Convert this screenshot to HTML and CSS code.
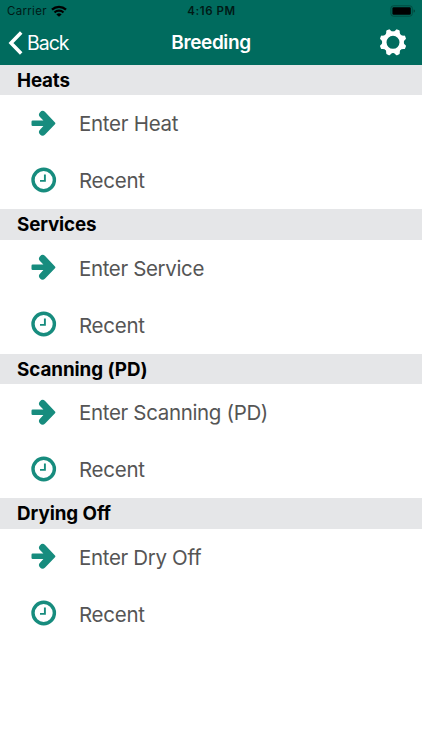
FILE: index.html
```html
<!DOCTYPE html>
<html lang="en">
<head>
<meta charset="utf-8">
<title>Breeding</title>
<link rel="stylesheet" href="styles.css">
</head>
<body>
<svg class="defs" width="0" height="0">
  <symbol id="arrow" viewBox="0 0 26 26">
    <path d="M1.7 10.6H12.4L9.2 7.2A3.3 3.3 0 0 1 14.1 2L24 12.4Q24.8 13.3 24 14.2L14.1 24.6A3.3 3.3 0 0 1 9.2 19.4L12.4 16H1.7Q.5 16 .5 14.8V11.8Q.5 10.6 1.7 10.6z" fill="currentColor"/>
  </symbol>
  <symbol id="clock" viewBox="0 0 26 26">
    <circle cx="12.7" cy="13" r="10.7" fill="none" stroke="currentColor" stroke-width="3.4"/>
    <path d="M13.9 7.4V13.9H9" fill="none" stroke="currentColor" stroke-width="1.9"/>
  </symbol>
</svg>
<header class="top">
  <div class="status">
    <div class="carrier"><span>Carrier</span>
      <svg width="16" height="12" viewBox="0 0 15 11"><g fill="none" stroke="#000" stroke-width="2.1"><path d="M.9 4.2a9.6 9.6 0 0 1 13.2 0"/><path d="M3.3 6.9a6.1 6.1 0 0 1 8.4 0"/></g><path d="M7.5 11L5 8.7a3.6 3.6 0 0 1 5 0z"/></svg>
    </div>
    <div class="time">4:16 PM</div>
    <svg class="battery" width="26" height="12" viewBox="0 0 26 12"><rect x=".9" y=".8" width="21.4" height="10.4" rx="2.6" fill="none" stroke="#004a3f" stroke-width="1"/><rect x="2.4" y="2.3" width="18.4" height="7.4" rx="1.2"/><path d="M23.7 4.2c1.6.7 1.6 2.9 0 3.6z" fill="#003f35"/></svg>
  </div>
  <nav class="nav">
    <a class="back"><svg width="15" height="24" viewBox="0 0 15 24"><path d="M13.2 1.6L3 12L13.2 22.4" fill="none" stroke="#fff" stroke-width="3.5"/></svg><span>Back</span></a>
    <h1>Breeding</h1>
    <svg class="gear" width="28" height="28" viewBox="-14 -13.3 28 28">
      <circle r="8.6" fill="none" stroke="#fff" stroke-width="4.2"/>
      <g fill="#fff">
        <path id="tooth" d="M-4.6 -9.2Q-2.4 -10.8 -2 -12.8Q-1.8 -13.5 -1.1 -13.5H1.1Q1.8 -13.5 2 -12.8Q2.4 -10.8 4.6 -9.2z" transform="rotate(22.5)"/>
        <use href="#tooth" transform="rotate(45)"/><use href="#tooth" transform="rotate(90)"/><use href="#tooth" transform="rotate(135)"/><use href="#tooth" transform="rotate(180)"/><use href="#tooth" transform="rotate(225)"/><use href="#tooth" transform="rotate(270)"/><use href="#tooth" transform="rotate(315)"/>
      </g>
    </svg>
  </nav>
</header>
<main>
  <section><h2>Heats</h2>
    <a class="row"><svg><use href="#arrow"/></svg><span>Enter Heat</span></a>
    <a class="row"><svg><use href="#clock"/></svg><span>Recent</span></a></section>
  <section><h2>Services</h2>
    <a class="row"><svg><use href="#arrow"/></svg><span class="service">Enter Service</span></a>
    <a class="row"><svg><use href="#clock"/></svg><span>Recent</span></a></section>
  <section><h2 class="scan">Scanning (PD)</h2>
    <a class="row"><svg><use href="#arrow"/></svg><span class="long">Enter Scanning (PD)</span></a>
    <a class="row"><svg><use href="#clock"/></svg><span>Recent</span></a></section>
  <section><h2 class="scan">Drying Off</h2>
    <a class="row"><svg><use href="#arrow"/></svg><span class="long">Enter Dry Off</span></a>
    <a class="row"><svg><use href="#clock"/></svg><span>Recent</span></a></section>
</main>
</body>
</html>
```
FILE: styles.css
```css
* { box-sizing: border-box; }
body { margin: 0; background: #fff; font-family: Inter, "Liberation Sans", sans-serif; overflow: hidden; }
.defs { display: block; }
.top { height: 65px; background: #006b5e; }
.status { height: 21px; display: grid; grid-template-columns: 1fr auto 1fr; align-items: center; padding: 0 6px 0 7px; font-size: 11.5px; color: #001a16; }
.carrier { display: flex; align-items: center; gap: 4px; letter-spacing: .3px; }
.time { font-weight: 600; letter-spacing: .6px; }
.battery { justify-self: end; }
.nav { height: 43px; display: grid; grid-template-columns: 1fr auto 1fr; align-items: center; padding: 0 8px; color: #fff; }
.back { display: flex; align-items: center; gap: 4px; font-size: 19.5px; letter-spacing: -1px; }
.back span { padding-top: 1px; }
h1 { margin: 0; font-size: 19px; font-weight: 600; letter-spacing: -.4px; }
.gear { justify-self: end; margin-right: 7px; }
h2 { margin: 0; height: 30.4px; padding-left: 17px; background: #e5e6e8; font-size: 18.8px; line-height: 31px; font-weight: 700; letter-spacing: -.15px; color: #000; }
h2.scan { letter-spacing: -.05px; }
.row { height: 57.05px; display: flex; align-items: center; gap: 22px; padding-left: 31px; font-size: 20.5px; color: #555; letter-spacing: -.28px; }
.row .service { letter-spacing: -.36px; }
.row .long { letter-spacing: -.34px; }
.row svg { width: 26px; height: 26px; margin-bottom: 2px; color: #178c7e; }
```
